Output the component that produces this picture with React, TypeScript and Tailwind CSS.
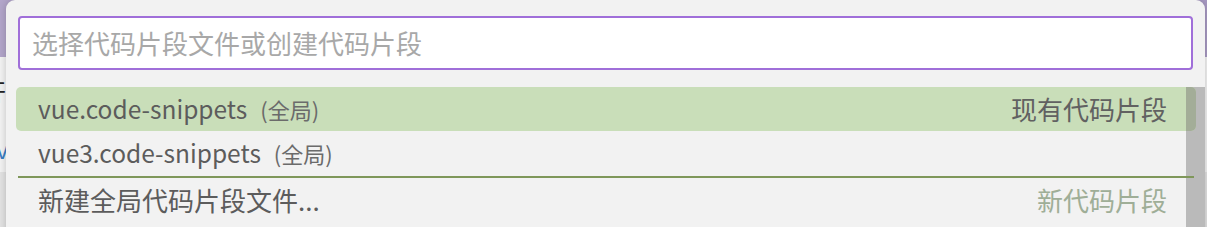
const FONT = "font-['Noto_Sans_CJK_SC','Noto_Sans',sans-serif]"

function Row({
  label,
  desc,
  right,
  active,
  rightMuted,
  cjk,
}: {
  label: string
  desc?: string
  right?: string
  active?: boolean
  rightMuted?: boolean
  cjk?: boolean
}) {
  return (
    <div
      className={`relative flex h-[44px] items-center rounded-[5px] pl-[22px] pr-[29px] ${
        active ? 'z-10 bg-[#c9deb9]' : ''
      }`}
    >
      <span className={`leading-none text-[#5c5c5c] ${cjk ? 'text-[26px]' : 'text-[24.5px]'}`}>{label}</span>
      {desc && <span className="ml-[13px] text-[22px] leading-none text-[#6b6b6b]">{desc}</span>}
      <span className="flex-1" />
      {right && (
        <span className={`text-[26px] leading-none ${rightMuted ? 'text-[#9fae97]' : 'text-[#616161]'}`}>
          {right}
        </span>
      )}
      {active && <div className="absolute right-0 top-0 h-full w-[10px] rounded-r-[5px] bg-[#a3ad98]" />}
    </div>
  )
}

export default function App() {
  return (
    <div className={`relative h-[227px] w-[1207px] overflow-hidden ${FONT}`}>
      {/* app behind the picker */}
      <div className="flex h-full flex-col">
        <div className="h-[57px] bg-gradient-to-r from-[#b3a6cb] to-[#a99bc4]" />
        <div className="h-[115px] bg-[#f4f4f4] text-[24px] text-[#222]">
          <div className="ml-[-18px] mt-[22px] leading-none">开</div>
          <div className="ml-[-4px] mt-[34px] leading-none text-[#3b7fc4]">v</div>
        </div>
        <div className="flex-1 bg-[#e4e4e4]" />
      </div>

      {/* quick pick */}
      <div className="absolute left-[6px] top-0 h-[240px] w-[1199px] rounded-t-[9px] bg-[#f2f2f2] shadow-[0_0_8px_rgba(0,0,0,0.22)]">
        <div className="px-[12px] pt-[16px]">
          <div className="flex h-[54px] items-center rounded-[4px] border-2 border-[#a06fd9] bg-white px-[12px]">
            <span className="text-[26px] leading-none text-[#a8a8a8]">选择代码片段文件或创建代码片段</span>
          </div>
        </div>

        <div className="relative mt-[17px]">
          <div className="absolute left-[1180px] top-0 h-[160px] w-[19px] bg-[#bababa]" />
          <div className="pl-[10px] pr-[9px]">
            <Row label="vue.code-snippets" desc="(全局)" right="现有代码片段" active />
            <Row label="vue3.code-snippets" desc="(全局)" />
            <div className="relative mx-[2px] mt-[1px] h-[2px] bg-[#7f975a]" />
            <Row label="新建全局代码片段文件..." right="新代码片段" rightMuted cjk />
          </div>
        </div>
      </div>
    </div>
  )
}
